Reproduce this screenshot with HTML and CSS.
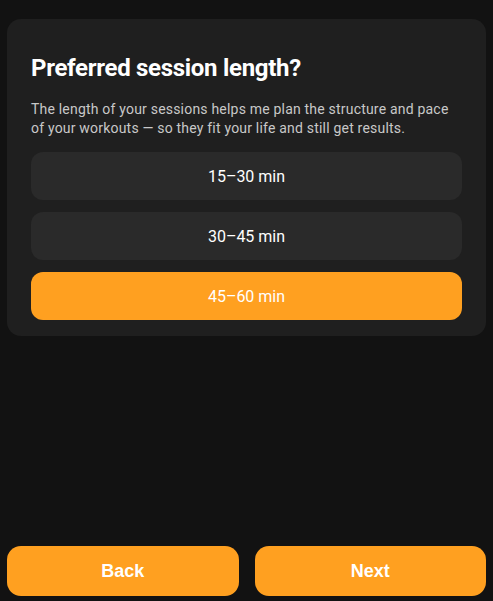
FILE: index.html
```html
<!DOCTYPE html>
<html>
<head>
<meta charset="utf-8">
<link rel="stylesheet" href="styles.css">
</head>
<body>
<div class="screen">
  <div class="card">
    <h1 class="title">Preferred session length?</h1>
    <p class="desc">The length of your sessions helps me plan the structure and pace of your workouts — so they fit your life and still get results.</p>
    <div class="options">
      <div class="option">15–30 min</div>
      <div class="option">30–45 min</div>
      <div class="option selected">45–60 min</div>
    </div>
  </div>
  <div class="nav">
    <button class="btn">Back</button>
    <button class="btn">Next</button>
  </div>
</div>
</body>
</html>
```
FILE: styles.css
```css
html, body {
  margin: 0;
  padding: 0;
  background: #121212;
  height: 100%;
}
.screen {
  box-sizing: border-box;
  height: 601px;
  padding: 19px 7px 5px 7px;
  display: flex;
  flex-direction: column;
  justify-content: space-between;
  font-family: Roboto, "Noto Sans", sans-serif;
}
.card {
  background: #1f1f1f;
  border-radius: 14px;
  padding: 34px 24px 16px 24px;
}
.title {
  margin: 0;
  color: #fff;
  font-size: 24px;
  font-weight: 700;
  line-height: 30px;
  letter-spacing: -0.3px;
}
.desc {
  margin: 17px 0 14px 0;
  color: #c8c8c8;
  font-size: 14px;
  font-weight: 400;
  letter-spacing: 0.2px;
  line-height: 19px;
}
.options {
  display: flex;
  flex-direction: column;
  gap: 12px;
}
.option {
  height: 48px;
  border-radius: 12px;
  background: #2a2a2a;
  color: #fff;
  font-size: 16px;
  font-weight: 400;
  display: flex;
  align-items: center;
  justify-content: center;
}
.option.selected {
  background: #ffa020;
}
.nav {
  display: flex;
  gap: 16px;
}
.btn {
  flex: 1;
  height: 50px;
  border: none;
  border-radius: 14px;
  background: #ffa020;
  color: #fff;
  font-family: "Liberation Sans", Arial, sans-serif;
  font-weight: 700;
  font-size: 18px;
}
```
